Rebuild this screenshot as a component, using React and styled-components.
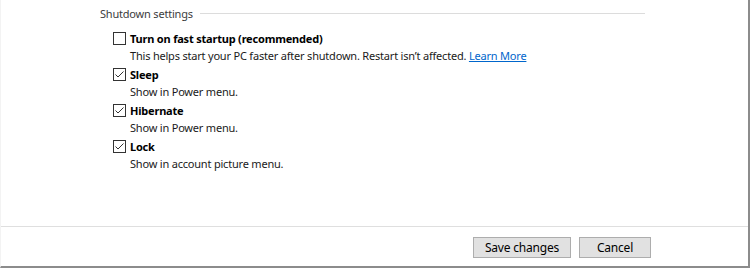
import React, { useState } from 'react';
import styled, { createGlobalStyle } from 'styled-components';

const GlobalStyle = createGlobalStyle`
  html, body {
    margin: 0;
    padding: 0;
    background: #ffffff;
  }
  body {
    font-family: "Noto Sans", "Open Sans", sans-serif;
    font-size: 11px;
    letter-spacing: -0.2px;
    color: #000;
  }
`;

const Window = styled.div`
  box-sizing: border-box;
  width: 750px;
  height: 268px;
  display: flex;
  flex-direction: column;
  background: #fff;
  border-left: 1px solid #f3f3f3;
  border-right: 2px solid #8c8c8c;
  border-bottom: 2px solid #8c8c8c;
`;

const Content = styled.div`
  flex: 1;
  padding: 4px 103px 0 99px;
`;

const GroupHeader = styled.div`
  display: flex;
  align-items: center;
  gap: 7px;
  height: 18px;
  color: #3c3c3c;
`;

const HeaderRule = styled.div`
  flex: 1;
  height: 1px;
  background: #dcdcdc;
`;

const OptionList = styled.div`
  display: flex;
  flex-direction: column;
  padding: 8px 0 0 13px;
  gap: 2px;
`;

const Option = styled.div`
  display: flex;
  flex-direction: column;
`;

const OptionRow = styled.label`
  display: flex;
  align-items: center;
  gap: 4px;
  height: 17px;
  cursor: default;
`;

const Box = styled.span`
  box-sizing: border-box;
  width: 13px;
  height: 13px;
  border: 1px solid #333;
  background: #fff;
  display: flex;
  align-items: center;
  justify-content: center;
`;

const Title = styled.span`
  font-weight: 700;
`;

const Description = styled.div`
  padding-left: 17px;
  height: 17px;
  line-height: 17px;
  color: #1a1a1a;
`;

const Link = styled.a`
  color: #0066cc;
  text-decoration: underline;
  cursor: pointer;
`;

const Footer = styled.div`
  display: flex;
  justify-content: flex-end;
  gap: 8px;
  border-top: 1px solid #dfdfdf;
  height: 40px;
  padding: 10px 97px 0 0;
  box-sizing: border-box;
`;

const Button = styled.button`
  box-sizing: border-box;
  width: ${({ $wide }) => ($wide ? '98px' : '72px')};
  height: 21px;
  background: #e1e1e1;
  border: 1px solid #adadad;
  font-family: inherit;
  font-size: 12px;
  letter-spacing: -0.2px;
  color: #000;
  padding: 0;
`;

const Check = () => (
  <svg width="11" height="11" viewBox="0 0 11 11">
    <path d="M1.5 5.5 L4 8 L9.5 2.5" fill="none" stroke="#333" strokeWidth="1" />
  </svg>
);

const Checkbox = ({ checked, onToggle, children }) => (
  <OptionRow onClick={onToggle}>
    <Box>{checked && <Check />}</Box>
    <Title>{children}</Title>
  </OptionRow>
);

const options = [
  {
    id: 'fast',
    title: 'Turn on fast startup (recommended)',
    desc: 'This helps start your PC faster after shutdown. Restart isn\u2019t affected.',
    link: true,
    checked: false,
  },
  { id: 'sleep', title: 'Sleep', desc: 'Show in Power menu.', checked: true },
  { id: 'hibernate', title: 'Hibernate', desc: 'Show in Power menu.', checked: true },
  { id: 'lock', title: 'Lock', desc: 'Show in account picture menu.', checked: true },
];

export default function App() {
  const [state, setState] = useState(
    Object.fromEntries(options.map((o) => [o.id, o.checked]))
  );

  return (
    <>
      <GlobalStyle />
      <Window>
        <Content>
          <GroupHeader>
            <span>Shutdown settings</span>
            <HeaderRule />
          </GroupHeader>
          <OptionList>
            {options.map((o) => (
              <Option key={o.id}>
                <Checkbox
                  checked={state[o.id]}
                  onToggle={() => setState({ ...state, [o.id]: !state[o.id] })}
                >
                  {o.title}
                </Checkbox>
                <Description>
                  {o.desc} {o.link && <Link>Learn More</Link>}
                </Description>
              </Option>
            ))}
          </OptionList>
        </Content>
        <Footer>
          <Button $wide>Save changes</Button>
          <Button>Cancel</Button>
        </Footer>
      </Window>
    </>
  );
}
